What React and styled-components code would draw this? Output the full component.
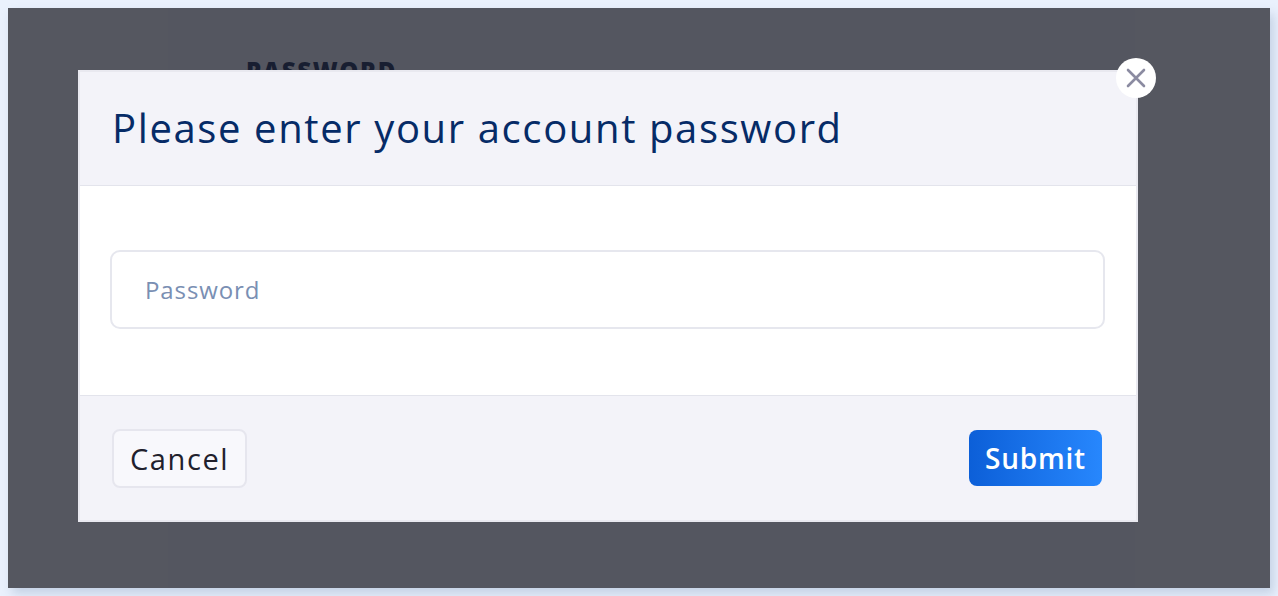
import React from 'react'
import styled, { createGlobalStyle } from 'styled-components'

const GlobalStyle = createGlobalStyle`
  html, body {
    margin: 0;
    background: #eaf1fd;
  }
  body {
    padding: 8px;
    font-family: "Open Sans", "Liberation Sans", sans-serif;
  }
`

const Shell = styled.div`
  position: relative;
  height: 580px;
  background: #ffffff;
  box-shadow: 4px 6px 10px rgba(150, 170, 200, 0.45);
  display: flex;
  overflow: hidden;
`

const SideCol = styled.div`
  width: ${(p) => p.$w}px;
  background: ${(p) => p.$bg};
`

const Content = styled.div`
  flex: 1;
  background: #fbf9fd;
  padding: 46px 0 0 78px;
`

const Label = styled.div`
  font-family: "Open Sans", sans-serif;
  font-weight: 800;
  font-size: 24px;
  letter-spacing: 1.6px;
  color: #03133a;
`

const Overlay = styled.div`
  position: absolute;
  inset: 0;
  background: rgba(32, 34, 46, 0.76);
  padding: 62px 0 0 70px;
`

const Modal = styled.div`
  position: relative;
  width: 1060px;
  box-sizing: border-box;
  border: 2px solid #e9e9f0;
  background: #ffffff;
`

const Header = styled.div`
  height: 113px;
  background: #f3f3f9;
  border-bottom: 1px solid #e3e4ec;
  display: flex;
  align-items: center;
  padding: 0 32px;
`

const Title = styled.h2`
  margin: 0;
  font-weight: 400;
  font-size: 40px;
  letter-spacing: 1.62px;
  color: #062b67;
  position: relative;
  top: -1px;
`

const Body = styled.div`
  padding: 64px 31px 66px 30px;
`

const Input = styled.input`
  display: block;
  width: 100%;
  height: 79px;
  box-sizing: border-box;
  border: 2px solid #e6e7ee;
  border-radius: 10px;
  padding: 0 33px;
  font-family: "Open Sans", sans-serif;
  font-size: 24px;
  letter-spacing: 0.9px;
  outline: none;
  &::placeholder {
    color: #7a8fb3;
  }
`

const Footer = styled.div`
  background: #f3f3f9;
  border-top: 1px solid #e3e4ec;
  display: flex;
  justify-content: space-between;
  align-items: center;
  padding: 32px 34px 32px 32px;
  height: 125px;
  box-sizing: border-box;
`

const Button = styled.button`
  font-family: "Open Sans", sans-serif;
  font-size: ${(p) => (p.$primary ? 28 : 29)}px;
  letter-spacing: ${(p) => (p.$primary ? 0.8 : 1.6)}px;
  border-radius: 8px;
  cursor: pointer;
  box-sizing: border-box;
  height: ${(p) => (p.$primary ? 56 : 59)}px;
  padding: 0 16px;
  font-weight: ${(p) => (p.$primary ? 600 : 400)};
  color: ${(p) => (p.$primary ? '#ffffff' : '#20202c')};
  background: ${(p) =>
    p.$primary ? 'linear-gradient(90deg, #0c5fd8, #2787fd)' : '#f8f8fc'};
  border: ${(p) => (p.$primary ? 'none' : '2px solid #e6e6ee')};
`

const Close = styled.button`
  position: absolute;
  top: -14px;
  right: -20px;
  width: 40px;
  height: 40px;
  border-radius: 50%;
  border: none;
  background: #ffffff;
  display: flex;
  align-items: center;
  justify-content: center;
  padding: 0;
  cursor: pointer;
`

function PasswordModal() {
  return (
    <Modal>
      <Close aria-label='close'>
        <svg width='22' height='22' viewBox='0 0 22 22'>
          <path d='M3 3 L19 19 M19 3 L3 19' stroke='#8b8ba1' strokeWidth='2.6' strokeLinecap='round' />
        </svg>
      </Close>
      <Header>
        <Title>Please enter your account password</Title>
      </Header>
      <Body>
        <Input type='password' placeholder='Password' />
      </Body>
      <Footer>
        <Button>Cancel</Button>
        <Button $primary>Submit</Button>
      </Footer>
    </Modal>
  )
}

export default function App() {
  return (
    <>
      <GlobalStyle />
      <Shell>
        <SideCol $w={160} $bg='#ffffff' />
        <Content>
          <Label>PASSWORD</Label>
        </Content>
        <SideCol $w={135} $bg='#ffffff' />
        <Overlay>
          <PasswordModal />
        </Overlay>
      </Shell>
    </>
  )
}
